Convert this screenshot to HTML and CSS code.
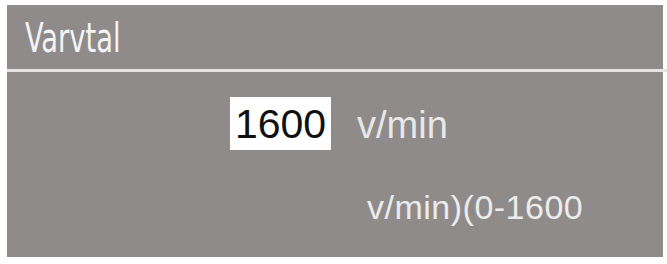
FILE: index.html
```html
<!DOCTYPE html>
<html>
<head>
<meta charset="utf-8">
<link rel="stylesheet" href="styles.css">
</head>
<body>
<div class="panel">
  <div class="header"><span class="title">Varvtal</span></div>
  <div class="sep"></div>
  <div class="body">
    <div class="row">
      <div class="input">1600</div>
      <span class="unit">v/min</span>
    </div>
    <div class="range">v/min)(0-1600</div>
  </div>
</div>
</body>
</html>
```
FILE: styles.css
```css
html, body { margin: 0; padding: 0; background: #ffffff; }
body { width: 667px; height: 264px; overflow: hidden; }
.panel {
  margin: 5px 0 0 7px;
  width: 656px;
  height: 252px;
  background: #8f8b8b;
  display: flex;
  flex-direction: column;
}
.header {
  height: 64px;
  display: flex;
  align-items: center;
  padding-left: 18px;
}
.title {
  font-family: "DejaVu Sans Condensed", "DejaVu Sans", sans-serif;
  font-stretch: condensed;
  font-size: 40px;
  line-height: 40px;
  color: #f4f4f4;
  transform: scaleX(0.76);
  transform-origin: left center;
  margin-top: 2px;
}
.sep { height: 3px; background: #e6e4e4; margin-right: -4px; }
.body { flex: 1; display: flex; flex-direction: column; align-items: flex-start; }
.row {
  display: flex;
  align-items: baseline;
  margin: 25px 0 0 223px;
}
.input {
  width: 101px;
  height: 53px;
  background: #ffffff;
  color: #111;
  font-family: "Liberation Sans", Arial, sans-serif;
  font-size: 41px;
  line-height: 55px;
  text-align: center;
}
.unit {
  margin-left: 26px;
  font-family: "Liberation Sans", Arial, sans-serif;
  font-size: 38px;
  color: #e8e8e8;
}
.range {
  margin: 40px 0 0 360px;
  font-family: "Liberation Sans", Arial, sans-serif;
  font-size: 34px;
  line-height: 34px;
  letter-spacing: 0.5px;
  color: #ececec;
}
```
